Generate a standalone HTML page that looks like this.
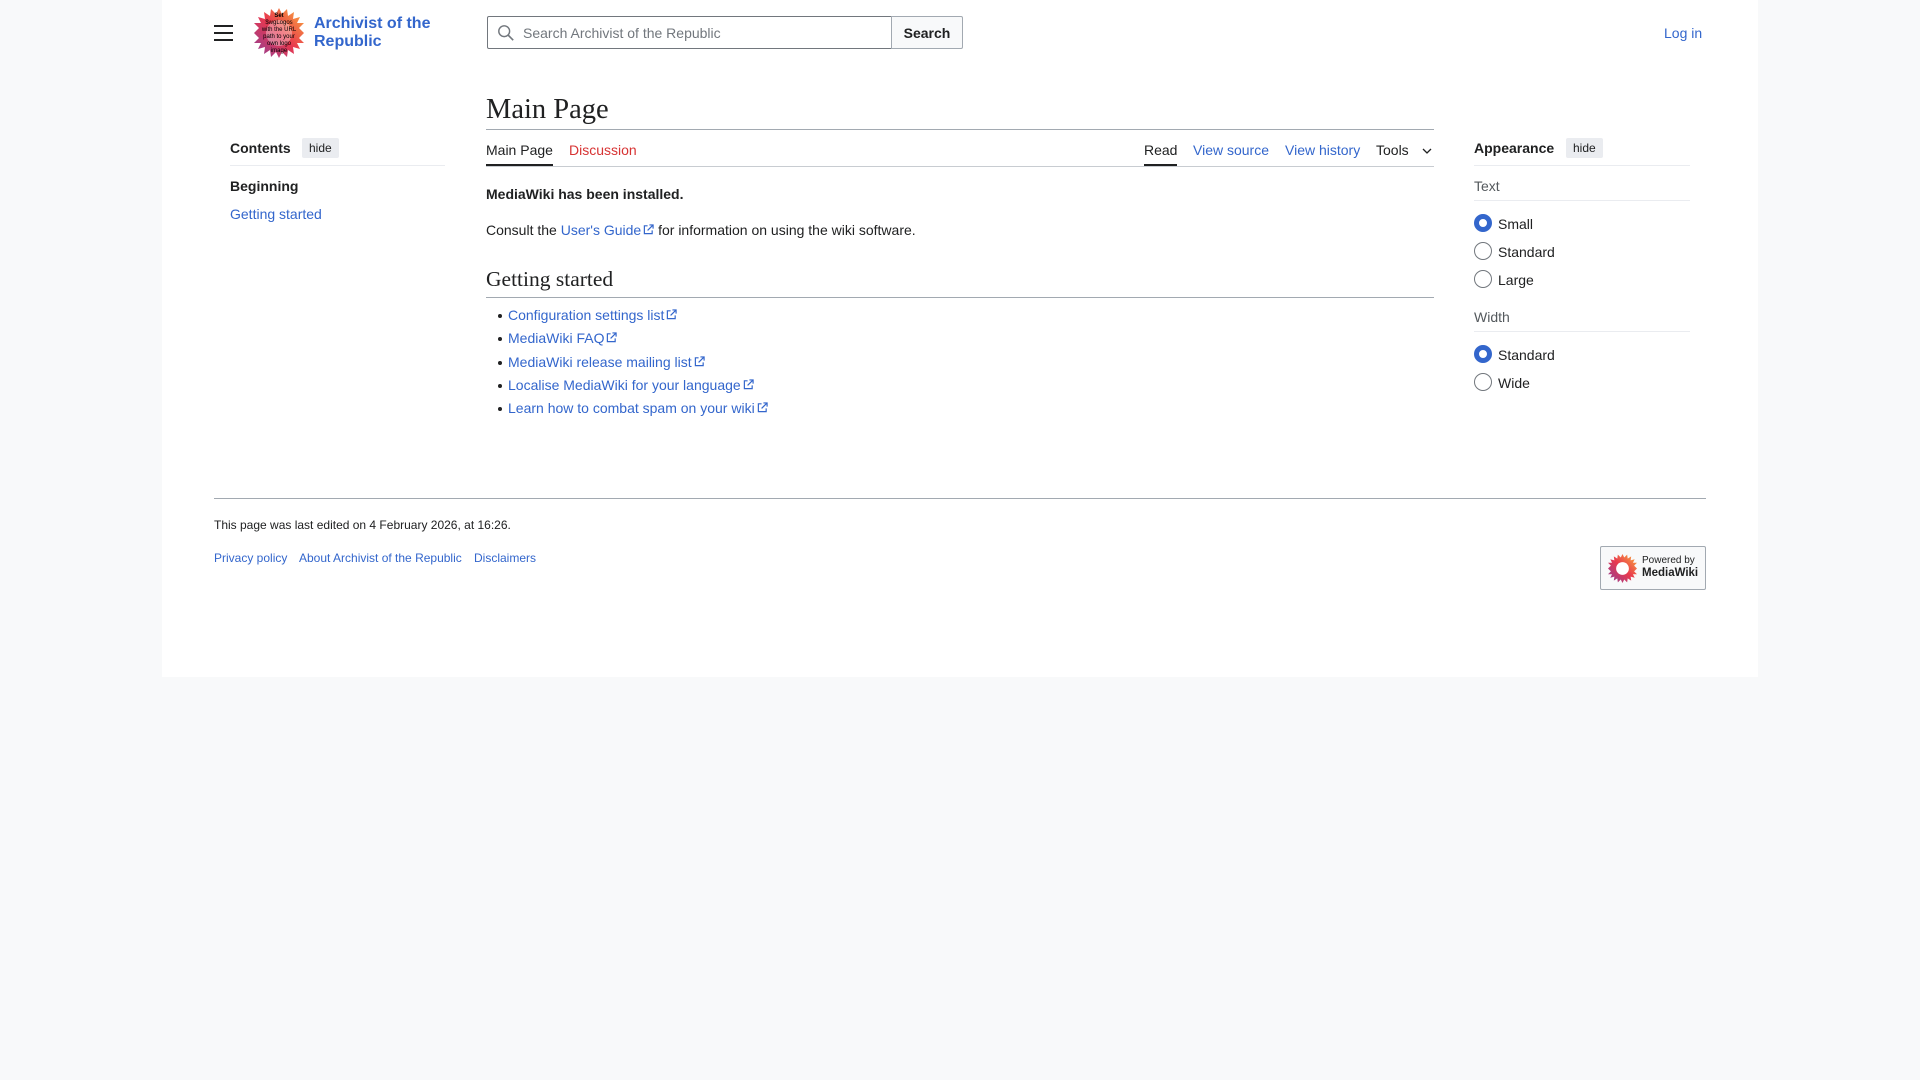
<!DOCTYPE html>
<html><head><meta charset="utf-8"><style>
*{margin:0;padding:0;box-sizing:border-box}
body{width:1920px;height:1080px;background:#f8f9fa;font-family:"Liberation Sans",Arial,sans-serif;color:#202122;font-size:14px;position:relative;overflow:hidden}
.a{position:absolute;white-space:nowrap}
a,.l{color:#3366cc;text-decoration:none}
.page{position:absolute;left:162px;top:0;width:1596px;height:677px;background:#fff}
.hr{position:absolute;height:1px;background:#a2a9b1}
.hr2{position:absolute;height:1px;background:#eaecf0}
.radio{position:absolute;width:18px;height:18px;border-radius:50%;border:1px solid #72777d;background:#fff}
.radio.on{border:5px solid #3366cc}
.btn{position:absolute;background:#eaecf0;border-radius:2px;font-size:12px;padding:3px 7px}
.ext{display:inline-block;width:11px;height:11px;margin-left:2px;vertical-align:0}
.li{position:absolute;left:508px;white-space:nowrap}
.li:before{content:"";position:absolute;left:-10px;top:7px;width:4px;height:4px;border-radius:50%;background:#202122}
</style></head><body>
<div class="page"></div>
<div class="a" style="left:214px;top:25px;width:19px;height:2px;background:#202122"></div>
<div class="a" style="left:214px;top:32px;width:19px;height:2px;background:#202122"></div>
<div class="a" style="left:214px;top:39px;width:19px;height:2px;background:#202122"></div>
<svg class="a" style="left:254px;top:8px" width="50" height="50" viewBox="0 0 50 50">
<defs><linearGradient id="g" x1="0" y1="1" x2="1" y2="0"><stop offset="0" stop-color="#8b3f9a"/><stop offset=".5" stop-color="#e8384f"/><stop offset="1" stop-color="#fbb03b"/></linearGradient></defs>
<polygon fill="url(#g)" points="25,0 28,6 33,1 34,8 40,4 39,11 46,9 43,15 50,15 45,20 50,25 45,30 50,35 43,35 46,41 39,39 40,46 34,42 33,49 28,44 25,50 22,44 17,49 16,42 10,46 11,39 4,41 7,35 0,35 5,30 0,25 5,20 0,15 7,15 4,9 11,11 10,4 16,8 17,1 22,6"/>
<circle cx="25" cy="25" r="13" fill="#fff" opacity=".35"/>
<text x="25" y="9" font-size="6" text-anchor="middle" font-family="Liberation Sans" font-weight="bold">Set</text>
<text x="25" y="16" font-size="6" text-anchor="middle" font-family="Liberation Sans">$wgLogos</text>
<text x="25" y="23" font-size="6" text-anchor="middle" font-family="Liberation Sans">with the URL</text>
<text x="25" y="30" font-size="6" text-anchor="middle" font-family="Liberation Sans">path to your</text>
<text x="25" y="37" font-size="6" text-anchor="middle" font-family="Liberation Sans">own logo</text>
<text x="25" y="44" font-size="6" text-anchor="middle" font-family="Liberation Sans">image</text>
</svg>
<div class="a l" style="left:314px;top:15px;font-size:16px;font-weight:bold;line-height:18px;color:#3366cc">Archivist of the<br>Republic</div>
<div class="a" style="left:487px;top:16px;width:405px;height:33px;border:1px solid #72777d;border-radius:2px 0 0 2px;background:#fff"></div>
<svg class="a" style="left:497px;top:24px" width="18" height="18" viewBox="0 0 20 20"><circle cx="8" cy="8" r="6" fill="none" stroke="#72777d" stroke-width="1.6"/><line x1="12.5" y1="12.5" x2="18" y2="18" stroke="#72777d" stroke-width="1.8"/></svg>
<div class="a" style="left:523px;top:25px;color:#72777d;font-size:14px">Search Archivist of the Republic</div>
<div class="a" style="left:891px;top:16px;width:72px;height:33px;border:1px solid #a2a9b1;background:#f8f9fa;border-radius:0 2px 2px 0;font-weight:bold;text-align:center;line-height:32px">Search</div>
<div class="a l" style="left:1664px;top:25px">Log in</div>
<div class="a" style="left:486px;top:94px;font-family:'Liberation Serif',serif;font-size:28.5px">Main Page</div>
<div class="hr" style="left:486px;top:129px;width:948px"></div>
<div class="a" style="left:486px;top:142px">Main Page</div>
<div class="a" style="left:486px;top:164px;width:67px;height:2px;background:#202122"></div>
<div class="a" style="left:569px;top:142px;color:#d73333">Discussion</div>
<div class="a" style="left:1144px;top:142px">Read</div>
<div class="a" style="left:1144px;top:164px;width:33px;height:2px;background:#202122"></div>
<div class="a l" style="left:1193px;top:142px">View source</div>
<div class="a l" style="left:1285px;top:142px">View history</div>
<div class="a" style="left:1376px;top:142px">Tools</div>
<svg class="a" style="left:1421px;top:146px" width="12" height="10" viewBox="0 0 12 10"><polyline points="2,3 6,7 10,3" fill="none" stroke="#202122" stroke-width="1.3"/></svg>
<div class="hr" style="left:486px;top:166px;width:948px;background:#c8ccd1"></div>
<div class="a" style="left:230px;top:140px;font-weight:bold">Contents</div>
<div class="btn" style="left:302px;top:138px">hide</div>
<div class="hr2" style="left:230px;top:165px;width:215px"></div>
<div class="a" style="left:230px;top:178px;font-weight:bold">Beginning</div>
<div class="a l" style="left:230px;top:206px">Getting started</div>
<div class="a" style="left:1474px;top:140px;font-weight:bold">Appearance</div>
<div class="btn" style="left:1566px;top:138px">hide</div>
<div class="hr2" style="left:1474px;top:165px;width:216px"></div>
<div class="a" style="left:1474px;top:178px;color:#54595d">Text</div>
<div class="hr2" style="left:1474px;top:200px;width:216px"></div>
<div class="radio on" style="left:1474px;top:214px"></div><div class="a" style="left:1498px;top:216px">Small</div>
<div class="radio" style="left:1474px;top:242px"></div><div class="a" style="left:1498px;top:244px">Standard</div>
<div class="radio" style="left:1474px;top:270px"></div><div class="a" style="left:1498px;top:272px">Large</div>
<div class="a" style="left:1474px;top:309px;color:#54595d">Width</div>
<div class="hr2" style="left:1474px;top:331px;width:216px"></div>
<div class="radio on" style="left:1474px;top:345px"></div><div class="a" style="left:1498px;top:347px">Standard</div>
<div class="radio" style="left:1474px;top:373px"></div><div class="a" style="left:1498px;top:375px">Wide</div>
<div class="a" style="left:486px;top:186px;font-weight:bold">MediaWiki has been installed.</div>
<div class="a" style="left:486px;top:222px">Consult the <span class="l">User's Guide<svg class="ext" viewBox="0 0 12 12"><path d="M5 2H1.5v8.5H10V7M7 1h4v4M11 1L5 7" fill="none" stroke="#3366cc" stroke-width="1.3"/></svg></span> for information on using the wiki software.</div>
<div class="a" style="left:486px;top:267px;font-family:'Liberation Serif',serif;font-size:21.5px">Getting started</div>
<div class="hr" style="left:486px;top:297px;width:948px"></div>
<div class="li l" style="top:307px">Configuration settings list<svg class="ext" viewBox="0 0 12 12"><path d="M5 2H1.5v8.5H10V7M7 1h4v4M11 1L5 7" fill="none" stroke="#3366cc" stroke-width="1.3"/></svg></div>
<div class="li l" style="top:330px">MediaWiki FAQ<svg class="ext" viewBox="0 0 12 12"><path d="M5 2H1.5v8.5H10V7M7 1h4v4M11 1L5 7" fill="none" stroke="#3366cc" stroke-width="1.3"/></svg></div>
<div class="li l" style="top:353.5px">MediaWiki release mailing list<svg class="ext" viewBox="0 0 12 12"><path d="M5 2H1.5v8.5H10V7M7 1h4v4M11 1L5 7" fill="none" stroke="#3366cc" stroke-width="1.3"/></svg></div>
<div class="li l" style="top:377px">Localise MediaWiki for your language<svg class="ext" viewBox="0 0 12 12"><path d="M5 2H1.5v8.5H10V7M7 1h4v4M11 1L5 7" fill="none" stroke="#3366cc" stroke-width="1.3"/></svg></div>
<div class="li l" style="top:400px">Learn how to combat spam on your wiki<svg class="ext" viewBox="0 0 12 12"><path d="M5 2H1.5v8.5H10V7M7 1h4v4M11 1L5 7" fill="none" stroke="#3366cc" stroke-width="1.3"/></svg></div>
<div class="hr" style="left:214px;top:498px;width:1492px"></div>
<div class="a" style="left:214px;top:518px;font-size:12px">This page was last edited on 4 February 2026, at 16:26.</div>
<div class="a l" style="left:214px;top:551px;font-size:12px">Privacy policy</div>
<div class="a l" style="left:299px;top:551px;font-size:12px">About Archivist of the Republic</div>
<div class="a l" style="left:474px;top:551px;font-size:12px">Disclaimers</div>
<div class="a" style="left:1600px;top:546px;width:106px;height:44px;border:1px solid #a2a9b1;border-radius:2px;background:#f8f9fa"></div>
<svg class="a" style="left:1608px;top:554px" width="29" height="29" viewBox="0 0 50 50"><polygon fill="url(#g)" points="25,0 28,6 33,1 34,8 40,4 39,11 46,9 43,15 50,15 45,20 50,25 45,30 50,35 43,35 46,41 39,39 40,46 34,42 33,49 28,44 25,50 22,44 17,49 16,42 10,46 11,39 4,41 7,35 0,35 5,30 0,25 5,20 0,15 7,15 4,9 11,11 10,4 16,8 17,1 22,6"/><circle cx="25" cy="25" r="11" fill="#fff"/></svg>
<div class="a" style="left:1642px;top:555px;font-size:10px;line-height:12px">Powered by<br><b style="font-size:11.5px">MediaWiki</b></div>
</body></html>
